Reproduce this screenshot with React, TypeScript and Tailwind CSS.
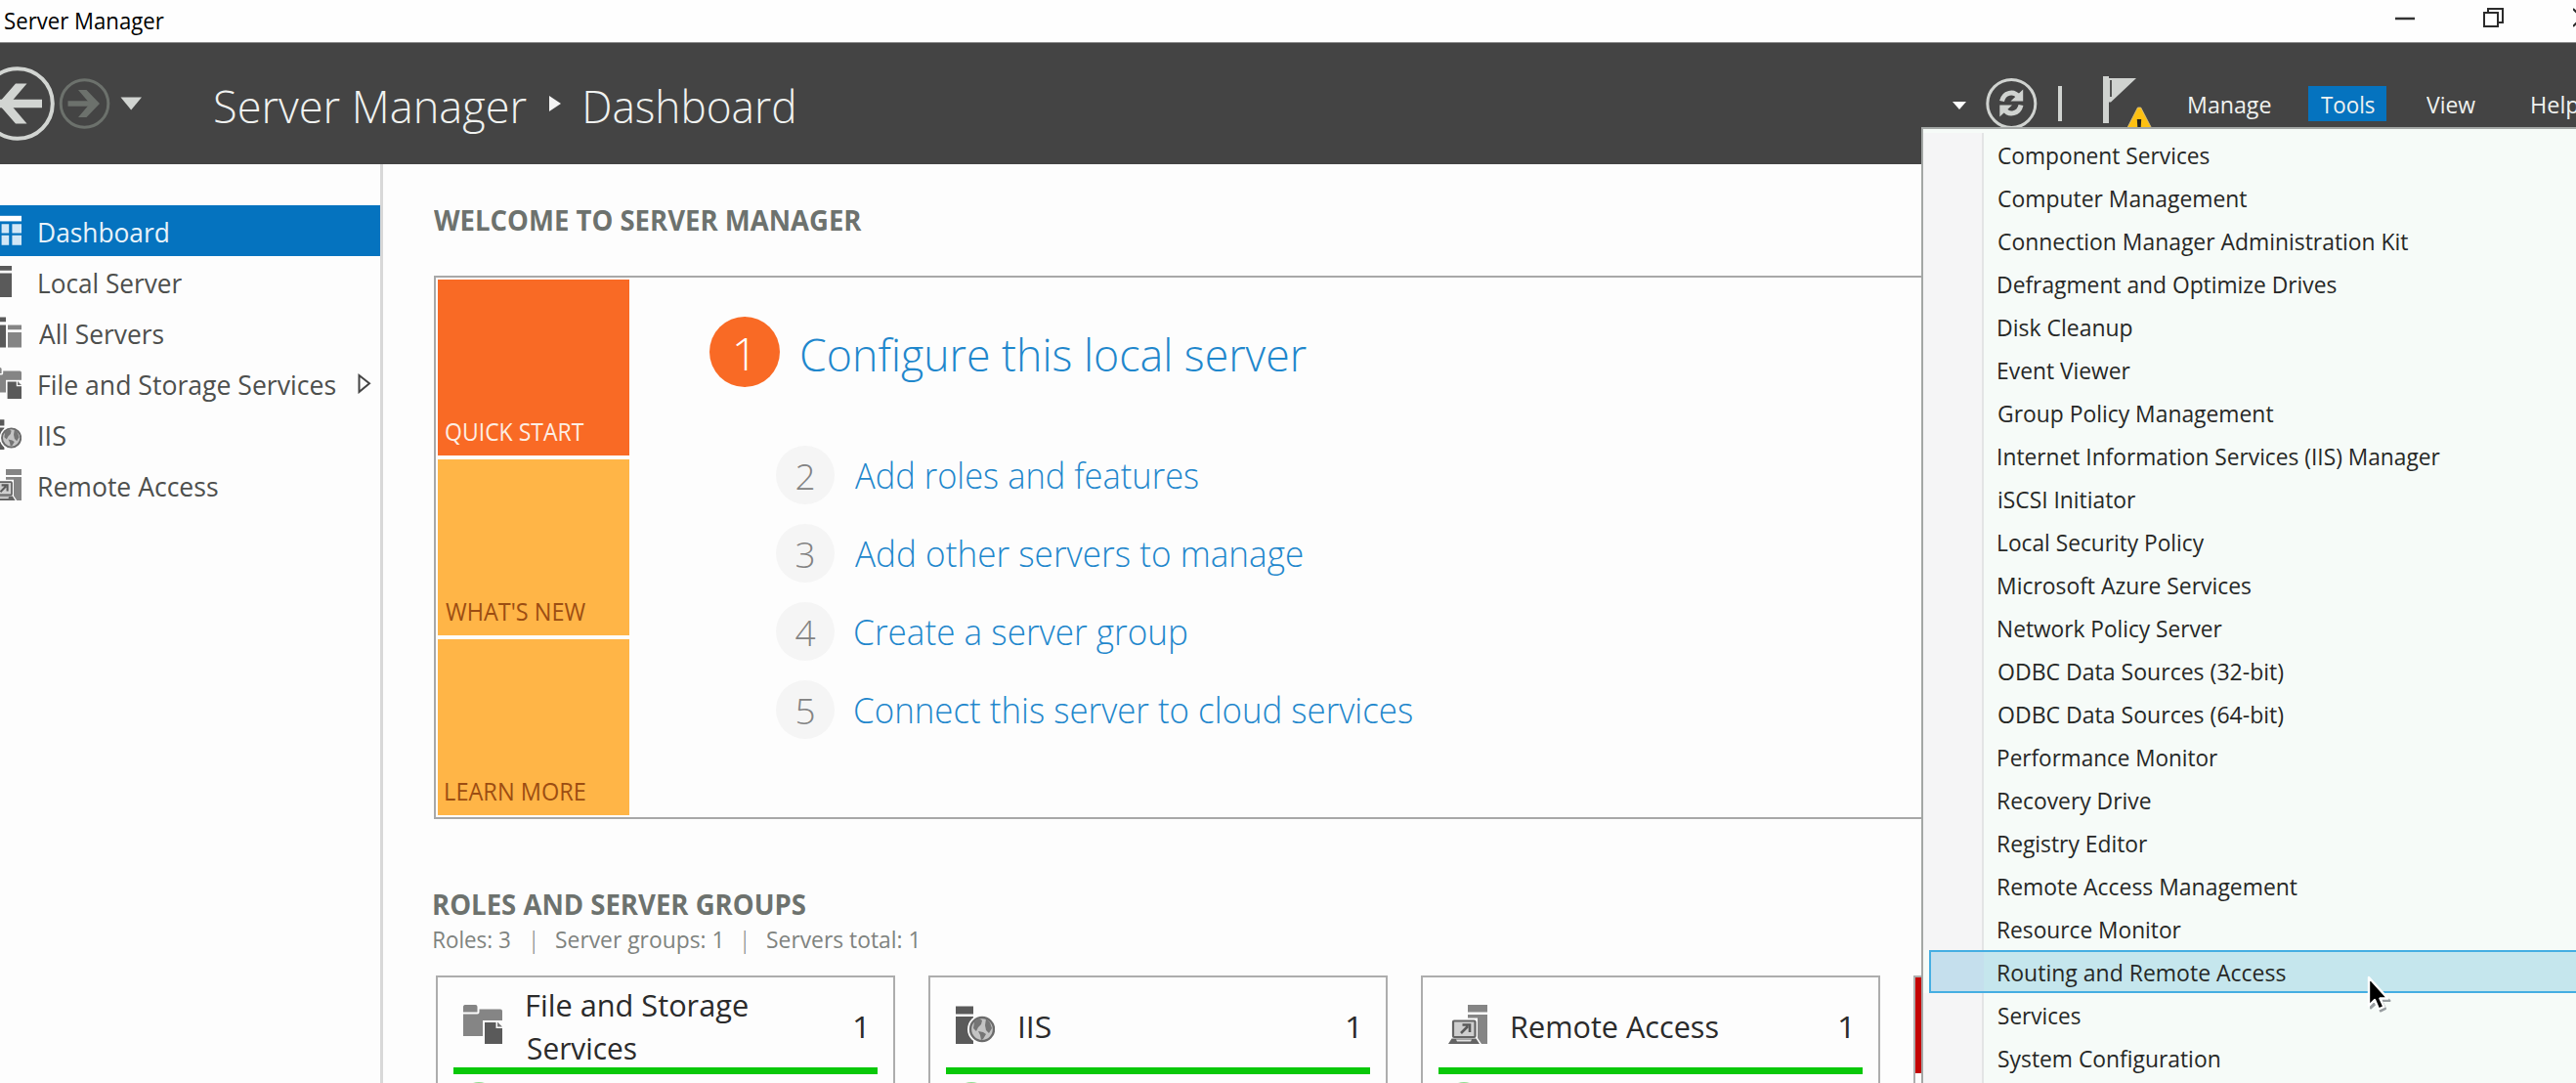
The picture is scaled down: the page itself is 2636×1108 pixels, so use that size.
import { useLayoutEffect, useRef, useState } from "react";
import type { ReactNode } from "react";

type LabelProps = { text: string; width: number; className?: string };

/** One line of text whose drawn ink is condensed or widened to an exact width. */
function Label({ text, width, className = "" }: LabelProps) {
  const ref = useRef<HTMLSpanElement>(null);
  const [transform, setTransform] = useState("none");
  useLayoutEffect(() => {
    const ctx = document.createElement("canvas").getContext("2d");
    if (!ref.current || !ctx) return;
    const cs = getComputedStyle(ref.current);
    ctx.font = `${cs.fontWeight} ${cs.fontSize} ${cs.fontFamily}`;
    const m = ctx.measureText(text);
    const scale = width / (m.actualBoundingBoxRight + m.actualBoundingBoxLeft);
    setTransform(`translateX(${m.actualBoundingBoxLeft * scale}px) scaleX(${scale})`);
  }, [text, width]);
  return (
    <span className={`block shrink-0 whitespace-nowrap ${className}`} style={{ width }}>
      <span ref={ref} className="inline-block origin-left" style={{ transform }}>
        {text}
      </span>
    </span>
  );
}

function FolderIcon({ className }: { className: string }) {
  return (
    <svg viewBox="0 0 40 40" className={className}>
      <path d="M1.500 0h11a2 2 0 0 1 2 2v5.500H0V2A2 2 0 0 1 1.500 0z" fill="#858585" />
      <path d="M16.500 4.500H38a2 2 0 0 1 2 2V32H0V9.500h14.500a2 2 0 0 0 2-2z" fill="#858585" />
      <path d="M20 16h20v24H20z" fill="#fdfdfd" />
      <path d="M22 18h11.500v6H40v16H22z" fill="#5a5a5a" />
      <path d="M35 17.500l5 5h-5z" fill="#777" />
    </svg>
  );
}

function IisIcon({ className }: { className: string }) {
  return (
    <svg viewBox="0 0 40 40" className={className}>
      <path d="M0 1.500h18V9.500H0zM0 12h18v28H0z" fill="#5a5a5a" />
      <circle cx="27" cy="25" r="15" fill="#fdfdfd" />
      <circle cx="27" cy="25" r="12" fill="#c4c4c4" stroke="#6b6b6b" strokeWidth="2.400" />
      <path d="M19 17l5-3 3 2-1 4-3 3-2 4-3-3zM31 14l4 4 2 6-3 5-3-3-1-5zM23 27l5 1 3 2-3 5-2 1-1-5z" fill="#757575" />
    </svg>
  );
}

function RemoteIcon({ className }: { className: string }) {
  return (
    <svg viewBox="0 0 40 40" className={className}>
      <path d="M20 0h20v7.500H20zM20 10h20v30H20z" fill="#858585" />
      <path d="M2 13.500h28V34l4 6H0z" fill="#fdfdfd" />
      <rect x="5" y="16.500" width="22.500" height="16.500" rx="1" fill="#cfcfcf" stroke="#646464" strokeWidth="2.200" />
      <path d="M3.500 34.500h25l3.500 5.500H0z" fill="#646464" />
      <path d="M8 35.500h16l-1 2H9z" fill="#e4e4e4" />
      <path d="M13 29l7-7M14.500 20.500H22v7.500" fill="none" stroke="#5a5a5a" strokeWidth="2.600" />
    </svg>
  );
}

function DashboardIcon({ className }: { className: string }) {
  return (
    <svg viewBox="0 0 40 40" className={className}>
      <path d="M0 1h40v7H0z" fill="#fff" />
      <path d="M0 11.500h11.500V23H0zM14.500 11.500H24V23h-9.500zM28 11.500h12V23H28zM0 26h11.500v12.500H0zM14.500 26H24v12.500h-9.500zM28 26h12v12.500H28z" fill="#d2e7f6" />
    </svg>
  );
}

function LocalIcon({ className }: { className: string }) {
  return (
    <svg viewBox="0 0 40 40" className={className}>
      <path d="M6 0h21.500v6H6zM6 9.500h21.500V40H6z" fill="#5a5a5a" />
    </svg>
  );
}

function AllIcon({ className }: { className: string }) {
  return (
    <svg viewBox="0 0 40 40" className={className}>
      <path d="M0 .5h20v6H0zM0 10.500h20v29H0z" fill="#5a5a5a" />
      <path d="M22.500 10.500H40v6H22.500zM22.500 20H40v19.500H22.500z" fill="#858585" />
    </svg>
  );
}

const navItems = [
  { text: "Dashboard", width: 132, Icon: DashboardIcon },
  { text: "Local Server", width: 146, Icon: LocalIcon },
  { text: "All Servers", width: 127, Icon: AllIcon },
  { text: "File and Storage Services", width: 303, Icon: FolderIcon },
  { text: "IIS", width: 27, Icon: IisIcon },
  { text: "Remote Access", width: 182.500, Icon: RemoteIcon },
];

const tools: [string, number][] = [
  ["Component Services", 216],
  ["Computer Management", 254],
  ["Connection Manager Administration Kit", 419],
  ["Defragment and Optimize Drives", 346],
  ["Disk Cleanup", 137],
  ["Event Viewer", 135],
  ["Group Policy Management", 281],
  ["Internet Information Services (IIS) Manager", 452],
  ["iSCSI Initiator", 140.500],
  ["Local Security Policy", 211],
  ["Microsoft Azure Services", 258.500],
  ["Network Policy Server", 229],
  ["ODBC Data Sources (32-bit)", 292],
  ["ODBC Data Sources (64-bit)", 292],
  ["Performance Monitor", 224.500],
  ["Recovery Drive", 156],
  ["Registry Editor", 152.500],
  ["Remote Access Management", 305.500],
  ["Resource Monitor", 187],
  ["Routing and Remote Access", 294],
  ["Services", 84],
  ["System Configuration", 226],
];

const steps: [string, string, number][] = [
  ["2", "Add roles and features", 351],
  ["3", "Add other servers to manage", 458],
  ["4", "Create a server group", 339],
  ["5", "Connect this server to cloud services", 570],
];

function TitleBar() {
  return (
    <div className="flex h-[43px] justify-between overflow-hidden bg-[#fefefe] pl-[5px]">
      <Label text="Server Manager" width={163} className="text-[24px] leading-[42px] text-black" />
      <div className="flex h-9 items-center">
        <svg className="h-9 w-[20px]" viewBox="0 0 20 36">
          <path d="M0 19h20" stroke="#333" strokeWidth="2.500" />
        </svg>
        <svg className="ml-[70px] h-9 w-[21px]" viewBox="0 0 21 36" fill="none" stroke="#2b2b2b" strokeWidth="2">
          <path d="M1 13h14v14H1zM5 13V9h15v14h-5" />
        </svg>
        <svg className="ml-[71px] h-9 w-[3px]" viewBox="0 0 3 36">
          <path d="M0 9l19 19M0 27L19 8" stroke="#2b2b2b" strokeWidth="2" />
        </svg>
      </div>
    </div>
  );
}

function Header() {
  return (
    <div className="flex h-[125px] items-center border-t border-[#8c8c8c] bg-[#444444] text-[#f0f2f0]">
      <svg className="h-[80px] w-[150px] shrink-0" viewBox="0 0 150 80" fill="none">
        <circle cx="18" cy="40" r="35.800" stroke="#d2d5d2" strokeWidth="4" />
        <path d="M43 40H0" stroke="#d2d5d2" strokeWidth="8.500" />
        <path d="M16 19.500h11.500L10 40l17.500 20.500H16L-2 40z" fill="#d2d5d2" />
        <circle cx="86.500" cy="40" r="24.300" stroke="#6c716c" strokeWidth="3" />
        <path d="M69.500 40H98" stroke="#6c716c" strokeWidth="5.500" />
        <path d="M80 26h8.500l13.500 14-13.500 14H80L92 40z" fill="#6c716c" />
        <path d="M123.500 33.500h21.500l-10.800 13z" fill="#d2d5d2" />
      </svg>
      <Label text="Server Manager" width={319} className="ml-[70px] pt-1 text-[46.500px] leading-[64px] font-[350]" />
      <svg className="ml-[23px] h-4 w-3 shrink-0" viewBox="0 0 12 16">
        <path d="M0 0l12 8L0 16z" fill="#f4f4f4" />
      </svg>
      <Label text="Dashboard" width={213} className="ml-[25px] pt-1 text-[46.500px] leading-[64px] font-[350]" />
      <svg className="ml-[1186px] h-[60px] w-[205px] shrink-0" viewBox="1998 76 205 60">
        <path d="M1998 104h14l-7 8z" fill="#fff" />
        <circle cx="2058.300" cy="106" r="24.500" fill="none" stroke="#d0d3d0" strokeWidth="3" />
        <g fill="none" stroke="#d0d3d0" strokeWidth="5">
          <path d="M2048.500 103.500c2-9 12-11.500 17.500-4" />
          <path d="M2068 107.500c-2 9-12 11.500-17.500 4" />
        </g>
        <path d="M2070.200 91.500v12h-12.700zM2046.300 119.500v-12h12.700z" fill="#d0d3d0" />
        <path d="M2106 88h4v36h-4z" fill="#d0d3d0" />
        <path d="M2152 78h6v2h28l-26 24.500h-2V126h-6z" fill="#d0d3d0" />
        <path d="M2160 82v17" stroke="#444" strokeWidth="1.800" />
        <path d="M2187.500 110h3.200l13 25h-29z" fill="#fdc012" stroke="#d8c58a" strokeWidth=".8" />
        <path d="M2186.800 122h4.400l-.6 9h-3.200z" fill="#222" />
      </svg>
      <Label text="Manage" width={84} className="ml-[37px] pt-[2px] text-[24px] leading-9" />
      <div className="ml-[38px] flex h-9 w-20 shrink-0 items-center justify-center bg-[#0573bf]">
        <Label text="Tools" width={55} className="pt-[2px] text-[24px] leading-9" />
      </div>
      <Label text="View" width={50.500} className="ml-[41px] pt-[2px] text-[24px] leading-9" />
      <Label text="Help" width={48} className="ml-[57px] pt-[2px] text-[24px] leading-9" />
    </div>
  );
}

function Sidebar() {
  return (
    <nav className="flex w-[392px] shrink-0 flex-col border-r-[3px] border-[#d8d8d8] pt-[42px]">
      {navItems.map(({ text, width, Icon }, i) => (
        <div
          key={text}
          className={
            i === 0
              ? "flex h-[52px] items-center bg-[#0573bf] text-[#e9f3fa]"
              : "flex h-[52px] items-center text-[#4d4f4d]"
          }
        >
          <Icon className="-ml-[10px] size-8 shrink-0" />
          <Label text={text} width={width} className="ml-[17.500px] pt-[4px] text-[27.500px] leading-[48px]" />
          {text.startsWith("File") && (
            <svg className="ml-[23px] h-[22px] w-[14px]" viewBox="0 0 14 22">
              <path d="M1.500 3v17L12 11.300z" fill="none" stroke="#444" strokeWidth="2" />
            </svg>
          )}
        </div>
      ))}
    </nav>
  );
}

function Tile({ text, width, className }: LabelProps) {
  return (
    <div className={`flex h-[180px] flex-col justify-end pb-[7px] pl-2 ${className}`}>
      <Label text={text} width={width} className="text-[25px] leading-9" />
    </div>
  );
}

function Welcome() {
  return (
    <section className="flex h-[556px] border-2 border-[#a8a8a8] p-[2px]">
      <div className="flex w-[196px] shrink-0 flex-col gap-1">
        <Tile text="QUICK START" width={141.500} className="bg-[#f96a25] text-[#fdeee4]" />
        <Tile text="WHAT'S NEW" width={143} className="bg-[#ffb547] text-[#9c4d12]" />
        <Tile text="LEARN MORE" width={143} className="bg-[#ffb547] text-[#9c4d12]" />
      </div>
      <div className="ml-[82px] flex flex-col gap-5 pt-[38px] font-[350]">
        <div className="mb-10 flex h-[72px] items-center">
          <div className="flex size-[72px] items-center justify-center rounded-full bg-[#f96a25] pt-[3px] text-[46.500px] leading-none text-white">
            1
          </div>
          <Label
            text="Configure this local server"
            width={517}
            className="ml-[21.500px] pt-1 text-[46.500px] leading-[64px] text-[#1f87cc]"
          />
        </div>
        {steps.map(([n, text, width]) => (
          <div key={n} className="ml-[68px] flex h-[60px] items-center">
            <div className="flex size-[60px] items-center justify-center rounded-full bg-[#f5f5f5] text-[37px] leading-none text-[#838383]">
              {n}
            </div>
            <Label text={text} width={width} className="ml-[20.500px] text-[37px] leading-[60px] text-[#1f87cc]" />
          </div>
        ))}
      </div>
    </section>
  );
}

function Card({ icon, children }: { icon: ReactNode; children: ReactNode }) {
  return (
    <div className="flex h-[200px] w-[470px] shrink-0 flex-col border-2 border-[#adadad] px-4">
      <div className="flex h-[92px] shrink-0 items-center pt-2 pl-[10px] text-[31.500px] leading-[44px] text-[#2b2b2b]">
        <div className="mb-1 size-10 shrink-0">{icon}</div>
        <div className="ml-[26px] w-[334px] shrink-0">{children}</div>
        <Label text="1" width={10.500} />
      </div>
      <div className="h-[7px] shrink-0 bg-[#08c808]" />
      <div className="mt-2 ml-2 size-9 shrink-0 rounded-full bg-[#8fdc8f]" />
    </div>
  );
}

function Menu() {
  return (
    <div className="absolute top-[130px] left-[1966px] flex h-[978px] w-[700px] flex-col border-2 border-r-0 border-b-0 border-[#a3a7a5] bg-[#f6fbf8] pt-1">
      {tools.map(([text, width], i) => (
        <div key={text} className="flex h-[44px] shrink-0">
          <div
            className={
              i === 19
                ? "ml-[6px] w-[56px] border-2 border-r-0 border-[#45aee2] bg-[#c5dfed]"
                : "w-[62px] border-r-2 border-[#e3e4e5] bg-[#f5f5f6]"
            }
          />
          <div className={i === 19 ? "grow border-y-2 border-[#45aee2] bg-[#c5e6ed] pl-[15px]" : "grow py-[2px] pl-[15px]"}>
            <Label text={text} width={width} className="pt-px text-[24px] leading-[40px] text-[#262826]" />
          </div>
        </div>
      ))}
      <div className="w-[62px] grow border-r-2 border-[#e3e4e5] bg-[#f5f5f6]" />
      <svg className="absolute top-[865px] left-[453px] h-[42px] w-[28px]" viewBox="0 0 28 42">
        <path d="M5 6v28.500l6-5.500 4 8.500 5-2.500-4-8h8.500z" fill="#5b6066" stroke="#5b6066" strokeWidth="2" strokeLinejoin="round" opacity=".6" />
        <path d="M3 3v29l6-6 4 9.500 5.500-2.500-4-8.500H22.500z" fill="#000" stroke="#fff" strokeWidth="2.400" strokeLinejoin="round" />
      </svg>
    </div>
  );
}

export default function App() {
  return (
    <div className="relative h-[1108px] w-[2636px] overflow-hidden bg-[#fdfdfd] font-['Open_Sans','Noto_Sans',sans-serif]">
      <TitleBar />
      <Header />
      <div className="flex h-[940px]">
        <Sidebar />
        <main className="w-[2244px] shrink-0 overflow-hidden pt-[37px] pl-[52px]">
          <Label text="WELCOME TO SERVER MANAGER" width={438} className="text-[28px] leading-10 font-bold text-[#6d726e]" />
          <div className="mt-[37px] w-[2300px]">
            <Welcome />
          </div>
          <Label
            text="ROLES AND SERVER GROUPS"
            width={380.500}
            className="mt-[67px] text-[28px] leading-10 font-bold text-[#6d726e]"
          />
          <div className="flex h-8 text-[24px] leading-8 text-[#7f837f]">
            <Label text="Roles: 3" width={78} />
            <Label text="|" width={2} className="ml-[23px]" />
            <Label text="Server groups: 1" width={168} className="ml-[22px]" />
            <Label text="|" width={2} className="ml-[24px]" />
            <Label text="Servers total: 1" width={153} className="ml-[22px]" />
          </div>
          <div className="mt-[21px] ml-[2px] flex gap-[34px]">
            <Card icon={<FolderIcon className="size-10" />}>
              <Label text="File and Storage" width={225.500} />
              <Label text="Services" width={111} />
            </Card>
            <Card icon={<IisIcon className="size-10" />}>
              <Label text="IIS" width={31} />
            </Card>
            <Card icon={<RemoteIcon className="size-10" />}>
              <Label text="Remote Access" width={210} />
            </Card>
            <div className="h-[200px] w-[470px] shrink-0 border-2 border-[#adadad]">
              <div className="h-[98px] bg-[#c40404]" />
            </div>
          </div>
        </main>
      </div>
      <Menu />
    </div>
  );
}
